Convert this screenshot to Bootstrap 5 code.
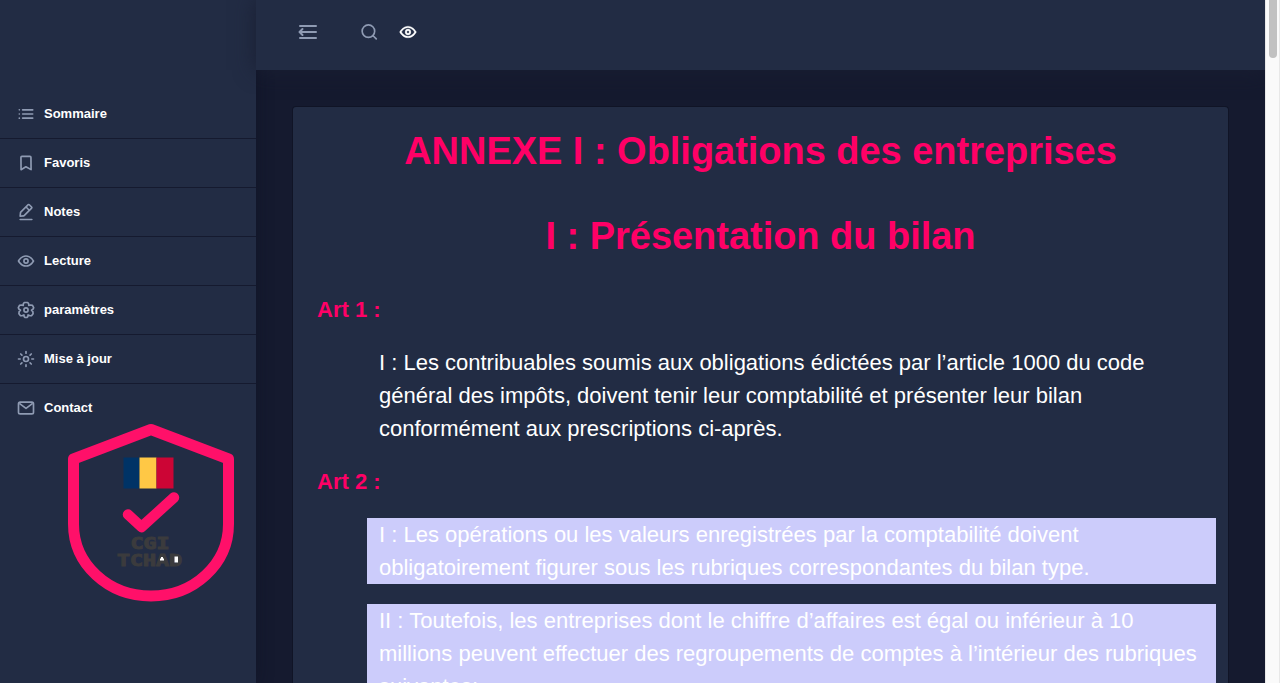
<!DOCTYPE html>
<html lang="fr">
<head>
<meta charset="utf-8">
<meta name="viewport" content="width=device-width, initial-scale=1">
<title>CGI Tchad</title>
<link href="https://cdn.jsdelivr.net/npm/bootstrap@5.3.0/dist/css/bootstrap.min.css" rel="stylesheet">
<script src="https://cdn.jsdelivr.net/npm/bootstrap@5.3.0/dist/js/bootstrap.bundle.min.js" defer></script>
<style>
body{font-family:"Liberation Sans",Arial,sans-serif;background:#151a2f;color:#fff;height:100vh;overflow:hidden}
svg{display:block;flex:none}
.side{width:256px;background:#222c44;padding-top:90px;box-shadow:0 0 16px rgba(13,16,30,.4)}
.side-link{height:49px;border-bottom:1px solid #151a2f;padding:0 16px;gap:8px;color:#fff;font-size:13px;font-weight:700;line-height:24px;text-decoration:none}
.side-link svg,.tool{color:#8f9bb3}
.side-link:last-of-type{border-color:transparent}
.crest{margin:-19px 0 0 66px}
.topbar{height:70px;background:#222c44;box-shadow:0 0 20px #1a1f33;padding:0 40px 6px;position:relative;z-index:2}
.search{margin:0 19px 0 39px}
.sheet{margin:36px 36px 0;height:577px;overflow:hidden;background:#222c44;border:1px solid #101426;border-bottom:0;border-radius:4px 4px 0 0;padding:2px 12px 0 24px}
.sheet h1{font-size:37.95px;font-weight:700;line-height:85px;color:#ff0066;margin:0 12px 0 0;text-align:center;white-space:nowrap}
.sheet h2{font-size:22px;font-weight:700;line-height:33px;color:#ff0066;margin:0 0 20px}
.sheet h1+h2{margin-top:14px}
.para{font-size:22px;line-height:33px;margin:0 0 20px 50px;padding:0 12px;white-space:nowrap}
.lit{background:#ccccfb}
.rail{width:15px;background:#fafafa;border:solid #e8e8e8;border-width:0 1px;padding-left:3px;position:relative;z-index:3}
.thumb{width:8px;height:58px;background:#c1c1c1;border-radius:0 0 4px 4px}
</style>
</head>
<body class="d-flex">
<nav class="side flex-shrink-0">
  <a class="side-link d-flex align-items-center" href="#"><svg width="20" height="20" viewBox="0 0 24 24" fill="currentColor"><circle cx="4" cy="7" r="1"/><circle cx="4" cy="12" r="1"/><circle cx="4" cy="17" r="1"/><rect x="7" y="6" width="14" height="2" rx=".94"/><rect x="7" y="11" width="14" height="2" rx=".94"/><rect x="7" y="16" width="14" height="2" rx=".94"/></svg>Sommaire</a>
  <a class="side-link d-flex align-items-center" href="#"><svg width="20" height="20" viewBox="0 0 24 24" fill="currentColor"><path d="M6.09 21.06a1 1 0 0 1-1-1L4.94 5.4a2.26 2.26 0 0 1 2.18-2.35L16.71 3a2.27 2.27 0 0 1 2.23 2.31l.14 14.66a1 1 0 0 1-.49.87 1 1 0 0 1-1 0l-5.7-3.16-5.29 3.23a1.2 1.2 0 0 1-.51.15zm5.76-5.55a1.11 1.11 0 0 1 .5.12l4.71 2.61-.12-12.95c0-.2-.13-.34-.21-.33l-9.6.09c-.08 0-.19.13-.19.33l.12 12.9 4.28-2.63a1.06 1.06 0 0 1 .51-.14z"/></svg>Favoris</a>
  <a class="side-link d-flex align-items-center" href="#"><svg width="20" height="20" viewBox="0 0 24 24" fill="currentColor"><path d="M19 20H5a1 1 0 0 0 0 2h14a1 1 0 0 0 0-2zM5 18h.09l4.17-.38a2 2 0 0 0 1.21-.57l9-9a1.92 1.92 0 0 0-.07-2.71L16.66 2.6A2 2 0 0 0 14 2.53l-9 9a2 2 0 0 0-.57 1.21L4 16.91a1 1 0 0 0 .29.8A1 1 0 0 0 5 18zM15.27 4L18 6.73l-2 1.95L13.32 6zm-8.9 8.91L12 7.32l2.7 2.7-5.6 5.61-3 .28z"/></svg>Notes</a>
  <a class="side-link d-flex align-items-center" href="#"><svg width="20" height="20" viewBox="0 0 24 24" fill="currentColor"><path id="eye" d="M21.87 11.5c-.64-1.11-4.16-6.68-10.14-6.5-5.53.14-8.73 5-9.6 6.5a1 1 0 0 0 0 1c.63 1.09 4 6.5 9.89 6.5h.25c5.53-.14 8.74-5 9.6-6.5a1 1 0 0 0 0-1zM12.22 17c-4.31.1-7.12-3.59-8-5 1-1.61 3.61-4.9 7.61-5 4.29-.11 7.11 3.59 8 5-1.03 1.61-3.61 4.9-7.61 5zM12 8.5a3.5 3.5 0 1 0 3.5 3.5A3.5 3.5 0 0 0 12 8.5zm0 5a1.5 1.5 0 1 1 1.5-1.5 1.5 1.5 0 0 1-1.5 1.5z"/></svg>Lecture</a>
  <a class="side-link d-flex align-items-center" href="#"><svg width="20" height="20" viewBox="0 0 24 24" fill="none" stroke="currentColor" stroke-width="2" stroke-linejoin="round"><path d="M10 3h4L15.200 4.500 15.300 6.600 17.300 6 19.800 6.500 21.200 9.200 20.600 10.800 18.600 12.200 20.200 13.900 20.500 16.400 18.600 18.900 16.800 18.900 14.500 17.900 14.200 20 13 21H11L9.800 20 9.500 17.900 7.200 18.900 5.400 18.900 3.500 16.400 3.800 13.900 5.400 12.200 3.400 10.800 2.800 9.200 4.200 6.500 6.700 6 8.700 6.600 8.800 4.500Z"/><circle cx="12" cy="12" r="2.500"/></svg>paramètres</a>
  <a class="side-link d-flex align-items-center" href="#"><svg width="20" height="20" viewBox="0 0 24 24" fill="none" stroke="currentColor" stroke-width="2" stroke-linecap="round"><circle cx="12" cy="12" r="3"/><path d="M12 3v2M12 19v2M3 12h2M19 12h2M5.700 6l1.400 1.300M16.900 16.700l1.400 1.300M5.700 18l1.400-1.300M16.900 7.300l1.400-1.300"/></svg>Mise à jour</a>
  <a class="side-link d-flex align-items-center" href="#"><svg width="20" height="20" viewBox="0 0 24 24" fill="none" stroke="currentColor" stroke-width="2" stroke-linejoin="round"><rect x="3" y="5" width="18" height="14" rx="2"/><path d="M4 6.500l8 6 8-6"/></svg>Contact</a>
  <svg class="crest position-relative" width="170" height="184" viewBox="66 414 170 184" fill="none" overflow="visible">
    <path d="M151 429.500L228.500 459V524C228.500 564 194 596 151 596S73.500 564 73.500 524V459Z" stroke="#ff1069" stroke-width="11" stroke-linejoin="round"/>
    <path d="M123.500 457.500h16v31h-16z" fill="#003366"/><path d="M139.500 457.500h17v31h-17z" fill="#ffc845"/><path d="M156.500 457.500h17v31h-17z" fill="#cc0535"/>
    <path d="M128 514.500L141.500 527 174 497.500" stroke="#ff1069" stroke-width="10.500" stroke-linecap="round" stroke-linejoin="round"/>
    <g fill="#3b3b3d" stroke="#3b3b3d" stroke-width="1" font-family="DejaVu Sans Mono,monospace" font-weight="700" font-size="15.500"><text x="130.500" y="548.700" textLength="39" lengthAdjust="spacingAndGlyphs">CGI</text><text x="117" y="566" textLength="65" lengthAdjust="spacingAndGlyphs">TCHAD</text></g>
    <path d="M161 557h2v1.500h1v2h-4v-2h1zM174.500 556.500h3.500v6h-3.500z" fill="#fff"/>
  </svg>
</nav>
<div class="flex-grow-1 d-flex flex-column" style="min-width:0">
  <header class="topbar d-flex align-items-center flex-shrink-0">
    <svg class="tool" width="24" height="24" viewBox="0 0 24 24" fill="currentColor"><path d="M20.050 11H5.910l1.300-1.290a1 1 0 0 0-1.420-1.420l-3 3a1 1 0 0 0 0 1.420l3 3a1 1 0 0 0 1.420 0 1 1 0 0 0 0-1.420L5.910 13h14.140a1 1 0 0 0 .95-.95V12a1 1 0 0 0-.95-1z"/><rect x="3" y="17" width="18" height="2" rx=".95"/><rect x="3" y="5" width="18" height="2" rx=".95"/></svg>
    <svg class="tool search" width="20" height="20" viewBox="0 0 24 24" fill="none" stroke="currentColor" stroke-width="2" stroke-linecap="round"><circle cx="11.300" cy="11" r="7.500"/><path d="M16.900 16.500L20.700 20.300"/></svg>
    <svg width="20" height="20" viewBox="0 0 24 24" fill="#fff" stroke="#fff" stroke-width=".3"><use href="#eye"/></svg>
  </header>
  <main class="sheet flex-shrink-0">
    <h1>ANNEXE I : Obligations des entreprises</h1>
    <h1>I : Présentation du bilan</h1>
    <h2>Art 1 :</h2>
    <p class="para">I : Les contribuables soumis aux obligations édictées par l’article 1000 du code<br>général des impôts, doivent tenir leur comptabilité et présenter leur bilan<br>conformément aux prescriptions ci-après.</p>
    <h2>Art 2 :</h2>
    <p class="para lit">I : Les opérations ou les valeurs enregistrées par la comptabilité doivent<br>obligatoirement figurer sous les rubriques correspondantes du bilan type.</p>
    <p class="para lit">II : Toutefois, les entreprises dont le chiffre d’affaires est égal ou inférieur à 10<br>millions peuvent effectuer des regroupements de comptes à l’intérieur des rubriques<br>suivantes:</p>
  </main>
</div>
<div class="rail flex-shrink-0"><div class="thumb"></div></div>
</body>
</html>
